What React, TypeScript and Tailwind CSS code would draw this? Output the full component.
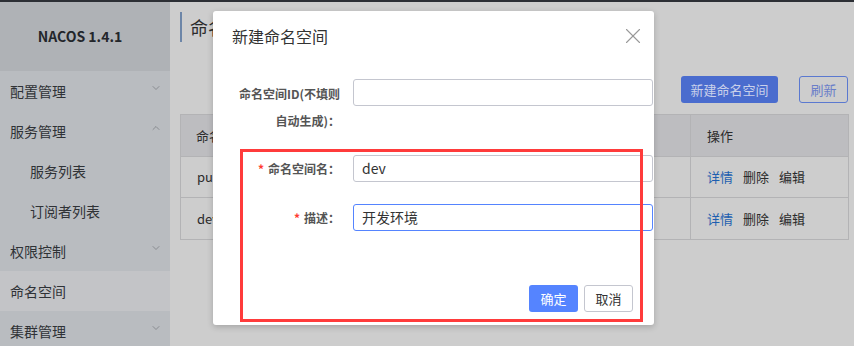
import { ChevronDown, ChevronUp, X } from 'lucide-react'

const font = { fontFamily: '"Noto Sans CJK SC", "Noto Sans", sans-serif' }

const menu = [
  { label: '配置管理', icon: 'down' },
  { label: '服务管理', icon: 'up' },
  { label: '服务列表', sub: true },
  { label: '订阅者列表', sub: true },
  { label: '权限控制', icon: 'down' },
  { label: '命名空间', active: true },
  { label: '集群管理', icon: 'down' },
]

const rows = ['public', 'dev']

function Sidebar() {
  return (
    <aside className="w-[170px] shrink-0 bg-[#b9bcc0]">
      <div className="h-[69px] bg-[#afb2b6] flex items-center justify-center pr-[10px] text-[14px] font-bold text-[#23262b]">
        NACOS 1.4.1
      </div>
      {menu.map((m) => (
        <div
          key={m.label}
          className={`h-10 flex items-center justify-between text-[14px] text-[#2f3236] ${
            m.sub ? 'pl-[30px]' : 'pl-[10px]'
          } pr-[8px] ${m.active ? 'bg-[#c3c4c7]' : ''}`}
        >
          <span>{m.label}</span>
          {m.icon === 'down' ? (
            <ChevronDown className="w-[12px] h-[12px] text-[#74777c] -mt-[6px]" strokeWidth={1.4} />
          ) : m.icon === 'up' ? (
            <ChevronUp className="w-[12px] h-[12px] text-[#74777c] -mt-[6px]" strokeWidth={1.4} />
          ) : null}
        </div>
      ))}
    </aside>
  )
}

function Main() {
  return (
    <main className="flex-1 pl-[10px] pr-[5px] pt-[10px]">
      <div className="h-[30px] border-l-2 border-[#6d86a8] pl-[8px] flex items-center text-[18px] text-[#2b2b2b]">
        命名空间
      </div>
      <div className="mt-[34px] flex justify-end gap-[21px] pr-px">
        <button className="h-[27px] w-[97px] rounded-[3px] bg-[#4a6cce] text-[13px] text-[#c9d0ea]">新建命名空间</button>
        <button className="h-[27px] w-[49px] rounded-[3px] border border-[#5b79d0] text-[13px] text-[#6a7ec9]">刷新</button>
      </div>
      <div className="mt-[11px] border border-[#b3b3b5] text-[13px] text-[#2b2b2b]">
        <div className="grid grid-cols-[220px_180px_110px_1fr] h-[42px] bg-[#bdbdc0] border-b border-[#b3b3b5]">
          <div className="flex items-center pl-[15px]">命名空间名称</div>
          <div className="flex items-center pl-[15px]">命名空间ID</div>
          <div className="flex items-center pl-[15px] border-r border-[#b3b3b5]">配置数</div>
          <div className="flex items-center pl-[16px]">操作</div>
        </div>
        {rows.map((r) => (
          <div key={r} className="grid grid-cols-[220px_180px_110px_1fr] h-[41px] border-b border-[#b3b3b5] last:border-b-0">
            <div className="flex items-center pl-[16px]">{r}</div>
            <div className="flex items-center pl-[15px]">{r}</div>
            <div className="flex items-center pl-[15px] border-r border-[#b3b3b5]">0</div>
            <div className="flex items-center pl-[16px] gap-[10px]">
              <span className="text-[#1d5fb0]">详情</span>
              <span>删除</span>
              <span>编辑</span>
            </div>
          </div>
        ))}
      </div>
    </main>
  )
}

const labelCls =
  'w-[140px] shrink-0 whitespace-nowrap text-right text-[12px] font-bold text-[#555] leading-[27px] pr-[13px]'

function Field({ label, required, value, focus }: { label: string; required?: boolean; value?: string; focus?: boolean }) {
  return (
    <div className="flex items-start">
      <div className={labelCls}>
        {required ? <span className="text-[#ff3b30] mr-[4px]">*</span> : null}
        {label}
      </div>
      <div
        className={`h-[27px] w-[300px] shrink-0 rounded-[3px] border bg-white flex items-center px-[8px] text-[14px] text-[#333] ${
          focus ? 'border-[#5584ff]' : 'border-[#c4c6cf]'
        }`}
      >
        {value}
      </div>
    </div>
  )
}

function Dialog() {
  return (
    <div className="absolute left-[213px] top-[11px] w-[441px] h-[314px] bg-white rounded-[3px] shadow-[0_2px_6px_rgba(0,0,0,0.2)]">
      <div className="flex items-center justify-between pl-[19px] pr-[8px] pt-[12px]">
        <span className="text-[16px] text-[#333] leading-[22px]">新建命名空间</span>
        <X className="w-[26px] h-[26px] text-[#999]" strokeWidth={1} />
      </div>
      <div className="pt-[30px] flex flex-col">
        <div className="flex items-start">
          <div className={`${labelCls} pt-px`}>
            命名空间ID(不填则
            <br />
            自动生成)：
          </div>
          <div className="h-[27px] w-[300px] shrink-0 rounded-[3px] border border-[#c4c6cf] bg-white" />
        </div>
        <div className="mt-[21px]">
          <Field label="命名空间名：" required value="dev" />
        </div>
        <div className="mt-[22px]">
          <Field label="描述：" required value="开发环境" focus />
        </div>
      </div>
      <div className="absolute right-[21px] bottom-[13px] flex gap-[6px]">
        <button className="h-[27px] w-[49px] rounded-[3px] bg-[#5584ff] text-[13px] text-white">确定</button>
        <button className="h-[27px] w-[49px] rounded-[3px] border border-[#c4c6cf] bg-white text-[13px] text-[#333]">取消</button>
      </div>
      <div className="absolute left-[27px] top-[138px] w-[403px] h-[173px] border-[3px] border-[#ff3b3b] pointer-events-none" />
    </div>
  )
}

export default function App() {
  return (
    <div className="relative w-[854px] h-[346px] overflow-hidden bg-[#cdcdcd]" style={font}>
      <div className="h-[2px] bg-[#2c2f35]" />
      <div className="flex h-[344px]">
        <Sidebar />
        <Main />
      </div>
      <Dialog />
    </div>
  )
}
